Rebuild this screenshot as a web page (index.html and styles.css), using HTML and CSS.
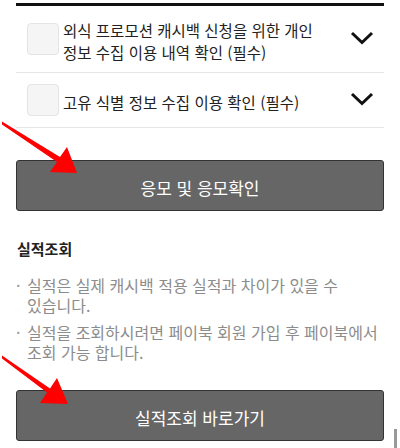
FILE: index.html
```html
<!DOCTYPE html>
<html lang="ko">
<head>
    <meta charset="UTF-8">
    <meta name="viewport" content="width=device-width, initial-scale=1.0">
    <title>캐시백 응모</title>
    <link rel="stylesheet" href="styles.css">
</head>
<body>
    <div class="page">
        <div class="agree-list">
            <div class="agree-row">
                <span class="check"></span>
                <span class="agree-text">외식 프로모션 캐시백 신청을 위한 개인 정보 수집 이용 내역 확인 (필수)</span>
                <svg class="chevron" width="24" height="14" viewBox="0 0 24 14"><polyline points="2,2 12,11.5 22,2" fill="none" stroke="#111" stroke-width="3"/></svg>
            </div>
            <div class="agree-row">
                <span class="check"></span>
                <span class="agree-text">고유 식별 정보 수집 이용 확인 (필수)</span>
                <svg class="chevron" width="24" height="14" viewBox="0 0 24 14"><polyline points="2,2 12,11.5 22,2" fill="none" stroke="#111" stroke-width="3"/></svg>
            </div>
        </div>

        <button class="btn-main apply-btn">응모 및 응모확인</button>

        <h2 class="section-title">실적조회</h2>
        <ul class="notice">
            <li>실적은 실제 캐시백 적용 실적과 차이가 있을 수 있습니다.</li>
            <li>실적을 조회하시려면 페이북 회원 가입 후 페이북에서 조회 가능 합니다.</li>
        </ul>

        <button class="btn-main">실적조회 바로가기</button>
    </div>

    <!-- annotation arrows -->
    <svg class="marks" width="400" height="448" viewBox="0 0 400 448">
        <polygon points="2,121.5 60,157 67,147 77,173 50,172 57,162 2,124.5" fill="#f00"/>
        <polygon points="2,355.5 50,388.5 57,378 68,404 40,403 47,392.5 2,358.5" fill="#f00"/>
    </svg>
    <div class="scroll-thumb"></div>
</body>
</html>
```

FILE: styles.css
```css
body {
    margin: 0;
    background: #fff;
    font-family: "Noto Sans CJK KR", "Noto Sans", sans-serif;
    color: #222;
    overflow: hidden;
}

.page {
    padding: 3px 16px 0;
}

.agree-list {
    border-top: 3px solid #111;
}

.agree-row {
    display: flex;
    align-items: center;
    padding: 13px 10px 9px 11px;
    border-bottom: 1px solid #e6e6e6;
}

.check {
    flex: none;
    width: 32px;
    height: 32px;
    margin: -2px 0 2px;
    box-sizing: border-box;
    background: #f5f5f5;
    border: 1px solid #e4e4e4;
    border-radius: 4px;
}

.agree-text {
    flex: 1;
    margin: 0 8px 0 4px;
    font-size: 15.5px;
    line-height: 22px;
    word-break: keep-all;
}

.chevron {
    flex: none;
    margin-bottom: 7px;
}

.btn-main {
    display: flex;
    align-items: center;
    justify-content: center;
    width: 100%;
    height: 51px;
    box-sizing: border-box;
    padding: 4px 0 0;
    background: #666;
    border: 1px solid #333;
    border-radius: 3px;
    color: #fff;
    font-family: inherit;
    font-size: 17px;
}

.apply-btn {
    margin-top: 32px;
}

.section-title {
    margin: 28px 0 0 1px;
    font-size: 15px;
    line-height: 20px;
    font-weight: bold;
    color: #222;
}

.notice {
    list-style: none;
    margin: 16px 0 28px;
    padding: 0;
    font-size: 16px;
    line-height: 20px;
    color: #8c8c8c;
    word-break: keep-all;
}

.notice li {
    display: flex;
    margin-bottom: 7px;
}

.notice li::before {
    content: "·";
    flex: none;
    width: 11px;
    color: #999;
}

.marks {
    position: absolute;
    left: 0;
    top: 0;
    pointer-events: none;
}

.scroll-thumb {
    position: absolute;
    left: 394px;
    top: 429px;
    width: 3px;
    height: 19px;
    background: #999;
}
```
